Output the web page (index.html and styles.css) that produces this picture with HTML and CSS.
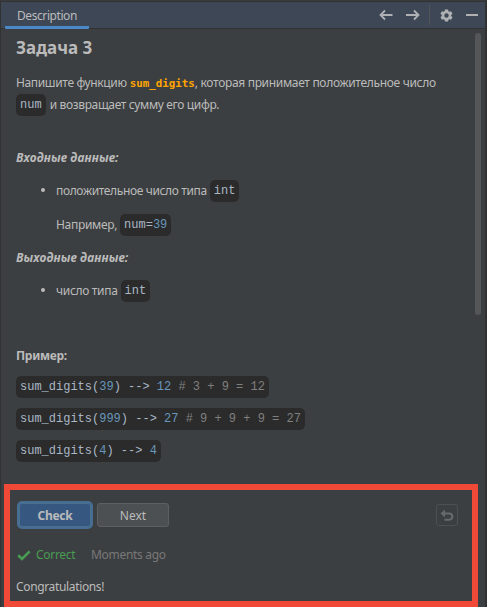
FILE: index.html
```
<!DOCTYPE html>
<html lang="ru">
<head>
<meta charset="utf-8">
<title>Description</title>
<link rel="stylesheet" href="styles.css">
</head>
<body>
<div class="window">
  <header class="toolbar">
    <div class="tab">Description</div>
    <div class="tools">
      <svg class="arrow" width="14" height="12" viewBox="0 0 14 12"><path d="M13.500 6H2M6 1.500L1.500 6L6 10.500"/></svg>
      <svg class="arrow" width="14" height="12" viewBox="0 0 14 12"><path d="M0 6H12M8 1.500L12.500 6L8 10.500"/></svg>
      <span class="divider"></span>
      <svg class="gear" width="13" height="13" viewBox="0 0 14 14"><path fill-rule="evenodd" d="M5.300 .5h3.400l.4 2 .9.5 1.900-.7 1.600 2.800-1.500 1.300v1.200l1.500 1.300-1.600 2.800-1.900-.7-.9.5-.4 2H5.300l-.4-2-.9-.5-1.900.7L.5 8.900 2 7.600V6.400L.5 5.100 2.100 2.300 4 3l.9-.5zM7 4.600a2.400 2.400 0 1 0 0 4.800a2.400 2.400 0 1 0 0-4.800z"/></svg>
      <span class="minimize"></span>
    </div>
  </header>
  <main class="description">
    <article>
      <h1>Задача 3</h1>
      <p class="intro"><span class="lead">Напишите функцию</span> <b class="fn">sum_digits</b><span class="rest">, которая принимает положительное число</span><br><code>num</code> <span class="tail">и возвращает сумму его цифр.</span></p>
      <h2 class="input-title">Входные данные:</h2>
      <ul class="inputs">
        <li><span class="input-text">положительное число типа</span> <code>int</code></li>
        <li class="plain"><span class="sample-text">Например,</span> <code>num=<i>39</i></code></li>
      </ul>
      <h2 class="output-title">Выходные данные:</h2>
      <ul class="outputs">
        <li><span class="output-text">число типа</span> <code>int</code></li>
      </ul>
      <h3>Пример:</h3>
      <div class="examples">
        <code>sum_digits(<i>39</i>) --&gt; <i>12</i> <s># 3 + 9 = 12</s></code>
        <code>sum_digits(<i>999</i>) --&gt; <i>27</i> <s># 9 + 9 + 9 = 27</s></code>
        <code>sum_digits(<i>4</i>) --&gt; <i>4</i></code>
      </div>
    </article>
    <div class="scrollbar"></div>
  </main>
  <section class="result">
    <div class="actions">
      <button class="check"><span>Check</span></button>
      <button class="next"><span>Next</span></button>
      <button class="undo"><svg width="14" height="13" viewBox="0 0 14 13"><path class="head" d="M.5 4.500L5 .5v8z"/><path class="curve" d="M4 4.500h5.200a3 3 0 0 1 0 6.200H4.500"/></svg></button>
    </div>
    <div class="status">
      <svg width="14" height="11" viewBox="0 0 14 11"><path d="M1.200 5.300L5 9L12.600 1.400"/></svg>
      <span class="correct">Correct</span>
      <span class="time">Moments ago</span>
    </div>
    <div class="message"><span>Congratulations!</span></div>
  </section>
</div>
</body>
</html>
```
FILE: styles.css
```
* { box-sizing: border-box; }
body {
  margin: 0;
  background: #3c3f41;
  color: #bbbbbb;
  font: 12px/20px "Noto Sans", sans-serif;
}
.window {
  width: 487px;
  height: 607px;
  overflow: hidden;
  display: flex;
  flex-direction: column;
  border-left: 1px solid #323232;
  border-right: 2px solid #303233;
  border-top: 1px solid #393b3c;
}
.toolbar {
  flex: none;
  height: 28px;
  display: flex;
  justify-content: space-between;
  background: #3d4756;
  border-top: 1px solid #323232;
  border-bottom: 1px solid #323232;
}
.tab {
  width: 84px;
  height: 27px;
  margin-left: 4px;
  padding-left: 12px;
  line-height: 28px;
  letter-spacing: -0.42px;
  border-bottom: 3px solid #4a88c7;
  border-radius: 1px;
}
.tools { display: flex; align-items: center; padding-right: 7px; }
.arrow { margin-right: 13px; fill: none; stroke: #afb1b3; stroke-width: 1.8; }
.divider { width: 1px; height: 20px; margin: 0 10px 0 -4px; background: #515558; }
.gear { fill: #afb1b3; margin-right: 13px; }
.minimize { width: 12px; height: 2px; background: #afb1b3; }
.description { flex: none; height: 455px; display: flex; }
article { flex: 1; padding-left: 15px; }
h1, h2, h3, p, ul { margin: 0; padding: 0; }
h1 { margin-top: 6px; font-size: 17px; line-height: 26px; }
.intro { height: 44px; margin-top: 11px; line-height: 22px; white-space: nowrap; }
.intro code { vertical-align: top; }
h2 { font-size: 12px; line-height: 20px; font-style: italic; letter-spacing: 0.15px; }
h3 { margin-top: 44px; font-size: 12px; line-height: 20px; letter-spacing: -0.3px; }
.input-title { margin-top: 32px; }
.inputs, .outputs { list-style: none; padding-left: 40px; }
.inputs { margin-top: 12px; }
.outputs { margin-top: 12px; }
li { display: flex; align-items: center; height: 22px; gap: 3px; position: relative; }
li::before { content: ""; position: absolute; left: -15px; top: 8px; width: 4px; height: 4px; border-radius: 50%; background: #bbbbbb; }
.plain { margin-top: 12px; }
.plain::before { display: none; }
.output-title { margin-top: 12px; }
code {
  display: inline-block;
  height: 22px;
  padding: 0 4px;
  border-radius: 5px;
  background: #2b2b2b;
  color: #a9b7c6;
  font: 12px/23px "Liberation Mono", monospace;
  white-space: pre;
}
code i { color: #6897bb; font-style: normal; }
code s { color: #808080; text-decoration: none; }
.fn { color: #ffa500; font: bold 10.8px/20px "DejaVu Sans Mono", monospace; }
.lead, .input-text { letter-spacing: -0.36px; }
.rest, .sample-text, .output-text { letter-spacing: -0.32px; }
.tail { margin-left: 1px; letter-spacing: -0.36px; }
.examples { margin-top: 10px; display: flex; flex-direction: column; align-items: flex-start; gap: 10px; }
.scrollbar { width: 6px; height: 282px; margin: 4px 4px 0 0; border-radius: 3px; background: #555657; }
.result { flex: none; width: 474px; height: 123px; margin-left: 3px; padding: 11px 14px 0 7px; border: 6px solid #f04938; }
.actions { display: flex; align-items: center; height: 28px; }
button { padding: 0; font: 12px/20px "Noto Sans", sans-serif; color: #bbbbbb; }
.check span, .next span { position: relative; top: 1px; }
.check { width: 76px; height: 28px; font-weight: bold; letter-spacing: -0.3px; background: #365880; border: 2px solid #466d94; border-radius: 5px; box-shadow: inset 0 0 0 1px #4c708c; }
.next { width: 72px; height: 24px; margin-left: 4px; background: #4c5052; border: 1px solid #5e6060; border-radius: 3px; }
.undo { display: flex; align-items: center; justify-content: center; width: 22px; height: 22px; margin-left: auto; background: transparent; border: 1px solid #4c5052; border-radius: 3px; }
.head { fill: #666a6c; }
.curve { fill: none; stroke: #666a6c; stroke-width: 2; }
.status { display: flex; align-items: center; height: 20px; margin-top: 16px; }
.status svg { fill: none; stroke: #499c54; stroke-width: 2.6; }
.correct { color: #499c54; margin-left: 5px; letter-spacing: -0.3px; width: 55px; }
.time { color: #787878; letter-spacing: -0.3px; }
.message { height: 20px; margin: 12px 0 0 -1px; letter-spacing: -0.35px; }
```
